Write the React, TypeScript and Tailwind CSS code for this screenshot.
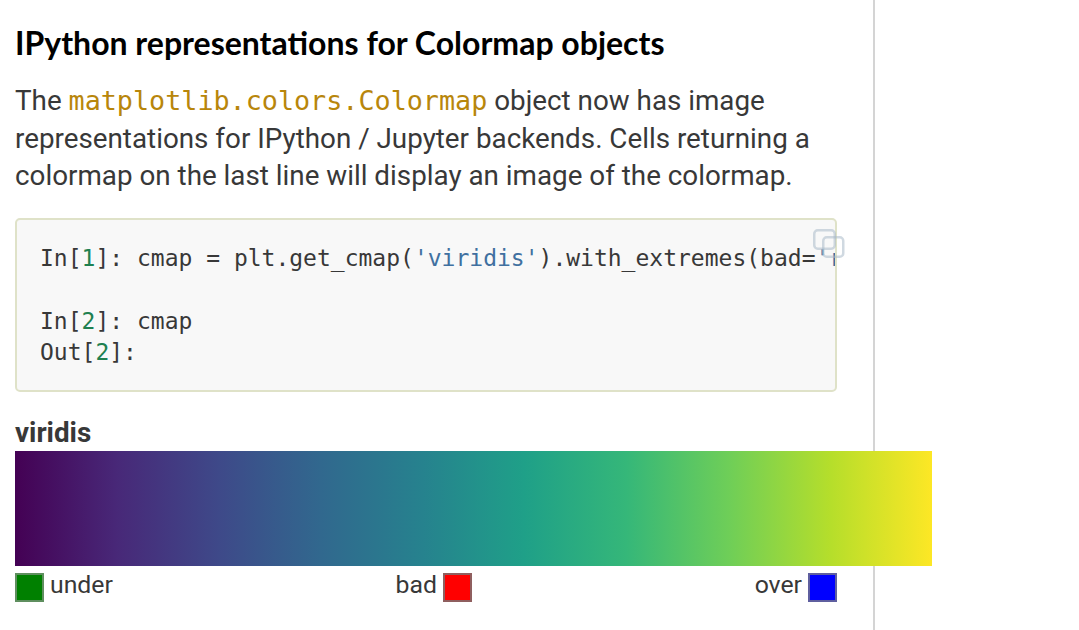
export default function App() {
  return (
    <div className="h-[630px] overflow-hidden bg-white font-['Roboto',sans-serif] text-[#383838]">
      <main className="h-full w-[875px] border-r-2 border-[#d4d4d4] pl-[15px] pr-[36px] pt-[23px]">
        <h2 className="font-['Lato',sans-serif] text-[32px] leading-[40px] font-bold text-black">
          IPython representations for Colormap objects
        </h2>
        <p className="mt-[19px] text-[27.8px] leading-[37.5px]">
          The{' '}
          <code className="font-['DejaVu_Sans_Mono',monospace] text-[26.75px] text-[#b8860b]">
            matplotlib.colors.Colormap
          </code>{' '}
          object now has image representations for IPython / Jupyter backends. Cells returning a
          colormap on the last line will display an image of the colormap.
        </p>

        {/* code block */}
        <div className="relative mt-[23px] h-[174px] w-[822px] rounded-[5px] border-2 border-[#dfe2c8] bg-[#f8f8f8]">
          <div className="h-full overflow-hidden pl-[23px] pt-[23px]">
            <pre className="font-['DejaVu_Sans_Mono',monospace] text-[23px] leading-[31.5px] text-[#383838]">
              <span>In[</span>
              <span className="text-[#208050]">1</span>
              <span>]: cmap = plt.get_cmap(</span>
              <span className="text-[#4070a0]">'viridis'</span>
              <span>).with_extremes(bad=</span>
              <span className="text-[#4070a0]">'r'</span>
              <span>, under=</span>
              <span className="text-[#4070a0]">'g'</span>
              <span>, over=</span>
              <span className="text-[#4070a0]">'b'</span>
              <span>)</span>
              {'\n\n'}
              <span>In[</span>
              <span className="text-[#208050]">2</span>
              <span>]: cmap</span>
              {'\n'}
              <span>Out[</span>
              <span className="text-[#208050]">2</span>
              <span>]:</span>
            </pre>
          </div>
          {/* copy button */}
          <svg className="absolute right-[-10px] top-[8px]" width="33" height="31" viewBox="0 0 33 31" fill="none">
            <rect x="2.25" y="2.25" width="20.5" height="18.5" rx="3.5" stroke="#a9b9c9" strokeOpacity="0.55" strokeWidth="2.5" />
            <rect x="11.25" y="9.25" width="20" height="19.5" rx="3.5" stroke="#a9b9c9" strokeOpacity="0.55" strokeWidth="2.5" />
          </svg>
        </div>

        <div className="mt-[22px] w-[822px]">
          <div className="text-[27.8px] leading-[37px] font-bold">viridis</div>
          <div className="h-[115px] w-[917px] bg-[linear-gradient(to_right,#440154,#482878,#3e4989,#31688e,#26828e,#1fa088,#35b779,#6ece58,#b5de2b,#fde725)]" />
          <div className="mt-[7px] flex justify-between text-[24.8px] leading-[24px]">
            <div className="flex items-start gap-[6px]">
              <div className="h-[29px] w-[29px] border-2 border-[#5f8f5f] bg-[#008000]" />
              <span>under</span>
            </div>
            <div className="flex items-start gap-[6px]">
              <span>bad</span>
              <div className="h-[29px] w-[29px] border-2 border-[#8f5f5f] bg-[#ff0000]" />
            </div>
            <div className="flex items-start gap-[6px]">
              <span>over</span>
              <div className="h-[29px] w-[29px] border-2 border-[#5f5f9f] bg-[#0000ff]" />
            </div>
          </div>
        </div>
      </main>
    </div>
  );
}
